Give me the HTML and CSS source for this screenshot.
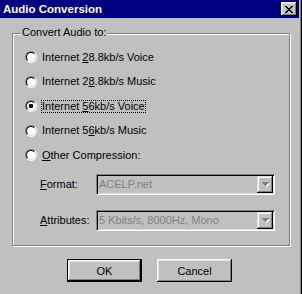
FILE: index.html
```html
<!DOCTYPE html>
<html lang="en">
<head>
    <meta charset="UTF-8">
    <meta name="viewport" content="width=device-width, initial-scale=1.0">
    <title>Audio Conversion</title>
    <link rel="stylesheet" href="styles.css">
</head>
<body>
    <div class="window">
        <div class="titlebar">
            <span class="title">Audio Conversion</span>
            <button type="button" class="close" aria-label="Close">
                <svg width="8" height="7" viewBox="0 0 8 7" shape-rendering="crispEdges">
                    <path d="M0 0h2v1H0zM6 0h2v1H6zM1 1h2v1H1zM5 1h2v1H5zM2 2h4v1H2zM3 3h2v1H3zM2 4h4v1H2zM1 5h2v1H1zM5 5h2v1H5zM0 6h2v1H0zM6 6h2v1H6z" fill="#000"/>
                </svg>
            </button>
        </div>

        <div class="body">
            <div class="group">
                <span class="legend">Convert Audio to:</span>
                <div class="options">
                    <div class="opt"><span class="radio"></span><span class="label">Internet <u>2</u>8.8kb/s Voice</span></div>
                    <div class="opt"><span class="radio"></span><span class="label">Internet 2<u>8</u>.8kb/s Music</span></div>
                    <div class="opt"><span class="radio checked"></span><span class="label focus">Internet <u>5</u>6kb/s Voice</span></div>
                    <div class="opt"><span class="radio"></span><span class="label">Internet 5<u>6</u>kb/s Music</span></div>
                    <div class="opt"><span class="radio"></span><span class="label"><u>O</u>ther Compression:</span></div>
                </div>
                <div class="field first">
                    <span class="field-label"><u>F</u>ormat:</span>
                    <div class="combo">
                        <span class="combo-text">ACELP.net</span>
                        <span class="drop"><svg width="7" height="5" viewBox="0 0 7 5" shape-rendering="crispEdges"><path d="M1 1h7v1H1zM2 2h5v1H2zM3 3h3v1H3zM4 4h1v1H4z" fill="#fff"/><path d="M0 0h7v1H0zM1 1h5v1H1zM2 2h3v1H2zM3 3h1v1H3z" fill="#808080"/></svg></span>
                    </div>
                </div>
                <div class="field">
                    <span class="field-label"><u>A</u>ttributes:</span>
                    <div class="combo">
                        <span class="combo-text">5 Kbits/s, 8000Hz, Mono</span>
                        <span class="drop"><svg width="7" height="5" viewBox="0 0 7 5" shape-rendering="crispEdges"><path d="M1 1h7v1H1zM2 2h5v1H2zM3 3h3v1H3zM4 4h1v1H4z" fill="#fff"/><path d="M0 0h7v1H0zM1 1h5v1H1zM2 2h3v1H2zM3 3h1v1H3z" fill="#808080"/></svg></span>
                    </div>
                </div>
            </div>

            <div class="actions">
                <button type="button" class="btn default">OK</button>
                <button type="button" class="btn">Cancel</button>
            </div>
        </div>
    </div>
</body>
</html>
```

FILE: styles.css
```css
html, body {
    margin: 0;
    background-color: #c0c0c0;
}
body {
    font-family: "Liberation Sans", Arial, sans-serif;
    font-size: 11px;
    color: #000;
}
.window {
    width: 302px;
    height: 294px;
    box-sizing: border-box;
    padding-right: 3px;
    box-shadow: inset -1px 0 #000, inset -2px 0 #808080;
    display: flex;
    flex-direction: column;
}
.titlebar {
    height: 18px;
    background-color: #000080;
    color: #fff;
    display: flex;
    align-items: center;
    justify-content: space-between;
    padding: 0 2px 0 3px;
}
.title {
    font-weight: bold;
    font-size: 11.5px;
}
.close {
    width: 16px;
    height: 14px;
    padding: 0;
    margin: 0;
    border: none;
    background-color: #c0c0c0;
    box-shadow: inset -1px -1px #000, inset 1px 1px #fff, inset -2px -2px #808080, inset 2px 2px #dfdfdf;
    display: flex;
    align-items: center;
    justify-content: center;
}
.close svg {
    display: block;
    margin: 0 0 0 -1px;
}
.body {
    display: flex;
    flex-direction: column;
}
.group {
    position: relative;
    margin: 15px 0 0 12px;
    width: 278px;
    height: 213px;
    box-sizing: border-box;
    border: 1px solid #808080;
    box-shadow: inset 1px 1px #fff, 1px 1px #fff;
}
.legend {
    position: absolute;
    left: 8px;
    top: -8px;
    padding: 0 1px;
    line-height: 13px;
    background-color: #c0c0c0;
}
.options {
    padding: 11px 0 0 12px;
}
.opt {
    height: 24.5px;
    display: flex;
    align-items: center;
}
.radio {
    position: relative;
    width: 12px;
    height: 12px;
    box-sizing: border-box;
    border-radius: 50%;
    border: 1px solid;
    border-color: #808080 #fff #fff #808080;
    margin-right: 4px;
    flex-shrink: 0;
}
.radio::before {
    content: "";
    display: block;
    width: 10px;
    height: 10px;
    box-sizing: border-box;
    border-radius: 50%;
    border: 1px solid;
    border-color: #000 #dfdfdf #dfdfdf #000;
    background-color: #fff;
}
.radio.checked::after {
    content: "";
    position: absolute;
    left: 3px;
    top: 3px;
    width: 4px;
    height: 4px;
    border-radius: 1px;
    background-color: #000;
}
.label {
    line-height: 11px;
    border: 1px dotted transparent;
}
.label.focus {
    border-color: #000;
}
.field {
    display: flex;
    align-items: center;
    padding-left: 27px;
    margin-top: 15px;
}
.field.first {
    margin-top: 6px;
}
.field-label {
    width: 56px;
}
.combo {
    width: 179px;
    height: 21px;
    box-sizing: border-box;
    border: 1px solid;
    border-color: #808080 #fff #fff #808080;
    box-shadow: inset 1px 1px #000, inset -1px -1px #dfdfdf;
    padding: 1px 1px 1px 2px;
    display: flex;
    align-items: center;
    justify-content: space-between;
}
.combo-text {
    color: #808080;
}
.drop {
    width: 16px;
    height: 17px;
    box-sizing: border-box;
    background-color: #c0c0c0;
    box-shadow: inset -1px -1px #000, inset 1px 1px #dfdfdf, inset -2px -2px #808080, inset 2px 2px #fff;
    display: flex;
    align-items: center;
    justify-content: center;
}
.drop svg {
    display: block;
}
.actions {
    display: flex;
    justify-content: center;
    gap: 15px;
    margin-top: 13px;
}
.btn {
    width: 75px;
    height: 23px;
    padding: 0;
    margin: 0;
    border: none;
    font-family: inherit;
    font-size: 11px;
    color: #000;
    background-color: #c0c0c0;
    box-shadow: inset -1px -1px #000, inset 1px 1px #fff, inset -2px -2px #808080, inset 2px 2px #dfdfdf;
}
.btn.default {
    border: 1px solid #000;
}
```
